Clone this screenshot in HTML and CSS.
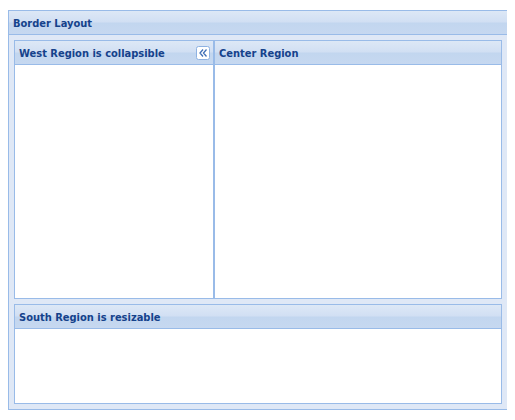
FILE: index.html
```html
<!DOCTYPE html>
<html>
<head>
<meta charset="utf-8">
<link rel="stylesheet" href="styles.css">
</head>
<body>
<div class="panel outer">
  <div class="hdr"><span class="title">Border Layout</span></div>
  <div class="outer-body">
    <div class="top-row">
      <div class="panel west">
        <div class="hdr">
          <span class="title">West Region is collapsible</span>
          <span class="tool">
            <svg width="14" height="14" viewBox="0 0 14 14">
              <rect x="0.5" y="0.5" width="13" height="13" rx="2" ry="2" fill="#ffffff" stroke="#8eb2e2"/>
              <path d="M7 3.5 L4 7 L7 10.5 M10.5 3.5 L7.5 7 L10.5 10.5" fill="none" stroke="#3f6fb6" stroke-width="1.3"/>
            </svg>
          </span>
        </div>
        <div class="body"></div>
      </div>
      <div class="panel center">
        <div class="hdr"><span class="title">Center Region</span></div>
        <div class="body"></div>
      </div>
    </div>
    <div class="panel south">
      <div class="hdr"><span class="title">South Region is resizable</span></div>
      <div class="body"></div>
    </div>
  </div>
</div>
</body>
</html>
```

FILE: styles.css
```css
html, body {
  background: #ffffff;
}
body {
  margin: 10px 8px;
  font-family: "DejaVu Sans Condensed", "DejaVu Sans", Verdana, sans-serif;
}
.panel {
  box-sizing: border-box;
  border: 1px solid #99bbe8;
  display: flex;
  flex-direction: column;
}
.outer {
  width: 500px;
  height: 400px;
  background: #dfe8f6;
}
.hdr {
  height: 23px;
  border-bottom: 1px solid #99bbe8;
  padding-left: 4px;
  font-size: 11px;
  font-weight: bold;
  font-stretch: condensed;
  color: #15428b;
  background: linear-gradient(#dde8f6 0%, #d1dff3 48%, #c2d6ef 52%, #c6d8f0 100%);
  display: flex;
  align-items: center;
  white-space: nowrap;
  flex: none;
}
.title {
  flex: 1;
  line-height: 19px;
  padding-top: 2px;
}
.outer-body {
  flex: 1;
  padding: 5px;
  display: flex;
  flex-direction: column;
  gap: 5px;
  min-height: 0;
}
.top-row {
  flex: 1;
  display: flex;
  min-height: 0;
}
.west {
  width: 200px;
  flex: none;
}
.center {
  flex: 1;
}
.south {
  height: 100px;
  flex: none;
}
.body {
  flex: 1;
  background: #ffffff;
}
.tool {
  width: 14px;
  height: 14px;
  margin-right: 3px;
  display: flex;
}
```
